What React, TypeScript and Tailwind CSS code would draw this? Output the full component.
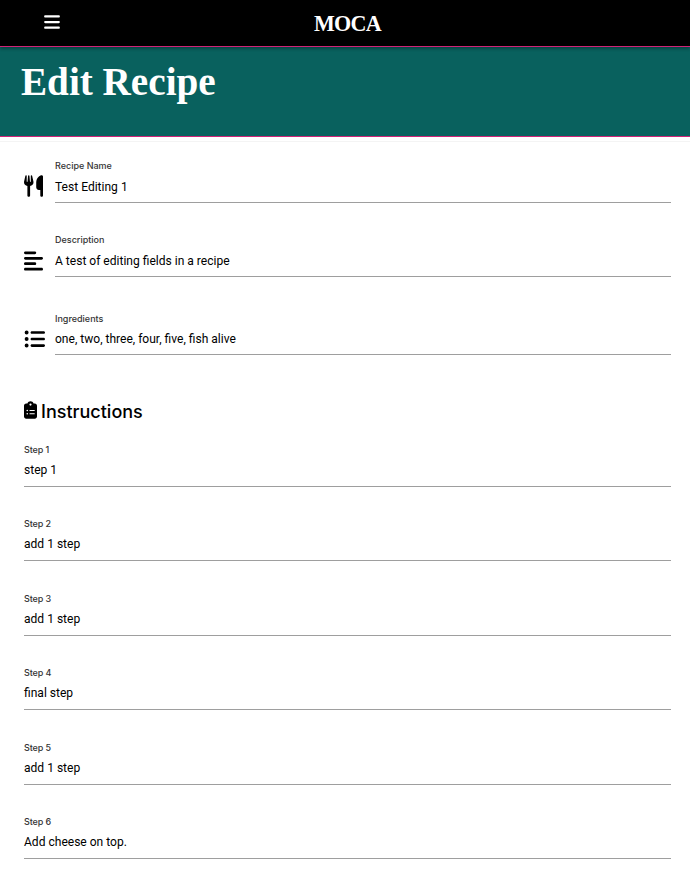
import { FaBars, FaUtensils, FaAlignLeft, FaListUl, FaClipboardList } from "react-icons/fa6";
import type { ReactNode } from "react";

interface FieldProps {
  label: string;
  value: string;
  icon?: ReactNode;
  className: string;
  labelClass?: string;
  valueClass?: string;
}

function Field({ label, value, icon, className, labelClass = "", valueClass = "" }: FieldProps) {
  return (
    <div className={`flex shrink-0 ${className}`}>
      {icon && <div className="w-[31px] shrink-0 text-black">{icon}</div>}
      <label className="block h-[46px] grow border-b border-[#9e9e9e]">
        <span className={`block h-[18px] font-['Inter',sans-serif] text-[9px] font-medium text-[#343434] ${labelClass}`}>{label}</span>
        <span className={`block h-6 font-['Roboto',sans-serif] text-[12.05px] text-black ${valueClass}`}>{value}</span>
      </label>
    </div>
  );
}

export default function App() {
  return (
    <div className="flex h-[880px] w-[690px] flex-col overflow-hidden bg-white">
      <nav className="relative grid h-[47px] shrink-0 grid-cols-3 border-b border-[#d02377] bg-black text-white shadow-[0_2px_3px_rgba(0,0,0,0.3)]">
        <div className="pt-[13px] pl-[43px] text-[18px]"><FaBars /></div>
        <div className="flex justify-center pt-[5px] pl-[5px] font-['Liberation_Serif',serif] text-[24px] leading-9 font-bold tracking-[-0.8px]">
          <span className="origin-center scale-x-[0.92]">MOCA</span>
        </div>
      </nav>
      <header className="h-[90px] shrink-0 border-b border-[#d02377] bg-[#09615e] pt-[10px] pl-[21px] text-white">
        <h1 className="origin-left scale-x-[0.955] font-['Liberation_Serif',serif] text-[41px] leading-[48px] font-bold">Edit Recipe</h1>
      </header>
      <div className="mt-1 h-px shrink-0 bg-[#f4f4f4]" />
      <form className="flex flex-col pt-[15px] pr-[19px] pl-6">
        <Field className="h-[74px]" label="Recipe Name" value="Test Editing 1" labelClass="leading-[18px]" valueClass="leading-6" icon={<FaUtensils className="mt-[18px] h-[22px] w-[19px]" />} />
        <Field className="h-[78px]" label="Description" value="A test of editing fields in a recipe" labelClass="leading-[18px]" valueClass="leading-6" icon={<FaAlignLeft className="mt-[19px] h-[22px] w-[19px]" />} />
        <Field className="h-[90px]" label="Ingredients" value="one, two, three, four, five, fish alive" labelClass="leading-[20px]" valueClass="leading-6" icon={<FaListUl className="mt-[19px] h-[22px] w-[21px]" />} />
        <h2 className="flex h-[42px] shrink-0 items-start text-black">
          <FaClipboardList className="mt-[2px] mr-[4px] h-[18px] w-[13px]" />
          <span className="pt-px font-['Inter',sans-serif] text-[18px] leading-6 font-medium">Instructions</span>
        </h2>
        {["step 1", "add 1 step", "add 1 step", "final step", "add 1 step", "Add cheese on top."].map((s, i) => (
          <Field key={i} className="h-[74.4px]" label={`Step ${i + 1}`} value={s} labelClass="leading-[17px] tracking-[-0.1px]" valueClass="leading-[22px]" />
        ))}
      </form>
    </div>
  );
}
